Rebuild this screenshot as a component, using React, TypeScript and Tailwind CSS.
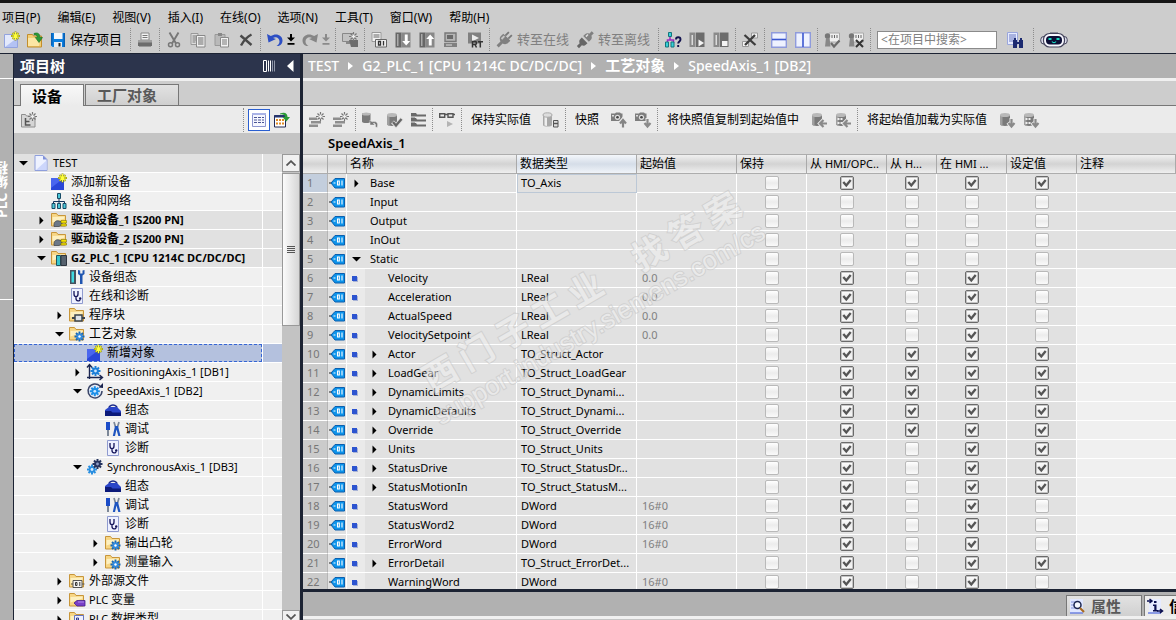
import { Fragment, type ReactNode } from "react";
import clsx from "clsx";

/* ------------------------------------------------------------------ icons */

const star = (
  <path d="M11.500-.5v9M7 4h9M8.500 1l6 6M14.500 1l-6 6" stroke="#8f8f10" strokeWidth="1.900" fill="none" />
);
const starFront = (
  <path d="M11.500 0v8M7.500 4h8M8.800 1.300l5.400 5.400M14.200 1.300L8.800 6.700" stroke="#ffff3c" strokeWidth="1.100" fill="none" />
);
const grayStar = (
  <>
    <path d="M11.500 0v9M7 4.500h9M8.500 1.500l6 6M14.500 1.500l-6 6" stroke="#777" strokeWidth="1.200" fill="none" />
    <path d="M11.500 2.500v4M9.500 4.500h4" stroke="#eee" strokeWidth="1.600" />
  </>
);
const folder = (
  <>
    <path d="M.5 1.500h5l1.500 2h7.500v10.500h-14z" fill="#f7d685" stroke="#c8963a" />
    <path d="M1.500 5l12-.5v2l-12 4z" fill="#fdf0c0" />
  </>
);
const gear = (
  <>
    <path d="M10.500 5.500v10M5.500 10.500h10M7 7l7 7M14 7l-7 7" stroke="#1767b8" strokeWidth="1.900" />
    <circle cx="10.500" cy="10.500" r="3" fill="#2f8be0" />
    <circle cx="10.500" cy="10.500" r="1.200" fill="#fff" />
  </>
);
const gearAt = (x: number, y: number, color: string, light: string) => (
  <g transform={`translate(${x} ${y})`}>
    <path d="M0-5V5M-5 0H5M-3.500-3.500L3.500 3.500M3.500-3.500L-3.500 3.500" stroke={color} strokeWidth="2" />
    <circle r="3.200" fill={color} />
    <circle r="1.400" fill={light} />
  </g>
);
const cyl = (
  <>
    <path d="M1 3v9c0 2.600 10 2.600 10 0V3z" fill="#7a7a7a" />
    <path d="M1 3v9c0 1 1 1.500 2.500 1.800V4z" fill="#a0a0a0" />
    <ellipse cx="6" cy="3" rx="5" ry="2" fill="#b9b9b9" />
  </>
);
const cylDots = <path d="M2.500 6h2v2h-2zM5.500 6h2v2h-2zM2.500 10h2v2h-2zM5.500 10h2v2h-2z" fill="#eee" />;
const arrowDownSmall = (
  <>
    <path d="M12.500 6v8M9 10.500l3.500 4 3.500-4" stroke="#ebebeb" strokeWidth="4" fill="none" />
    <path d="M12.500 7v7M9.500 11l3 3.500L15.500 11" stroke="#8a8a8a" strokeWidth="2.200" fill="none" />
  </>
);
const arrowLeftSmall = (
  <>
    <path d="M16 11.500H9.500M12.500 8L9 11.500l3.500 3.500" stroke="#ebebeb" strokeWidth="4" fill="none" />
    <path d="M16 11.500H9.500M12.500 8L9 11.500l3.500 3.500" stroke="#8a8a8a" strokeWidth="2.200" fill="none" />
  </>
);
const camera = (
  <>
    <path d="M0 1.500h4L5 .500h4l1 1h1.500v7.500H0z" fill="#7d7d7d" />
    <path d="M1 3h2v1.500H1z" fill="#ddd" />
    <circle cx="6.500" cy="5.300" r="2.600" fill="#ddd" />
    <circle cx="6.500" cy="5.300" r="1.300" fill="#444" />
  </>
);
const plug = (
  <g transform="rotate(45 8 8)">
    <path d="M5-1h1.800v5H5zM9.200-1H11v5H9.200z" fill="#777" />
    <path d="M3 4h10v3c0 3-2 4-3.500 4.500V17h-3v-5.500C5 11 3 10 3 7z" fill="#808080" />
    <path d="M4.500 5h2v4h-2z" fill="#c5c5c5" />
  </g>
);
const steth = (
  <>
    <path d="M2.500.5h11v15h-11z" fill="#eef1ff" stroke="#8f9bd0" />
    <path d="M5 3v3c0 3.500 4 3.500 4 0V3M7 8.500v2c0 3 4 3 4 1" stroke="#15155a" strokeWidth="1.300" fill="none" />
    <circle cx="11.200" cy="10.500" r="1.200" fill="#15155a" />
  </>
);

const ICONS: Record<string, ReactNode> = {
  newProject: (
    <>
      <path d="M.5 2.500h9l4 4v9H.5z" fill="#e3e9fc" stroke="#93a3de" />
      <path d="M1 15L13 6v9z" fill="#b3c2f4" />
      {star}
      {starFront}
    </>
  ),
  open: (
    <>
      <path d="M.5 2.500h5l1 1.500h8v11H.5z" fill="#f3ce75" stroke="#c28e2c" />
      <path d="M1 6h12l-1 8H1z" fill="#fce6a4" />
      <path d="M7 1.500c4-1.500 6 .5 6 4h2.500L12 10.500 8.300 5.500h2C10.300 3.500 9 2.500 7 2.800z" fill="#2b9a36" stroke="#146e20" strokeWidth=".6" />
    </>
  ),
  save: (
    <>
      <path d="M1 1h14v14H2.500L1 13.500z" fill="#0b7fe0" />
      <path d="M4 1h8.500v6H4z" fill="#f3f6fa" />
      <path d="M4 10h8v5H4z" fill="#e4ebf3" />
      <path d="M8.500 11h2v3.500h-2z" fill="#222" />
      <path d="M1 1h1.500v12H1zM13.500 1H15v14h-1.500z" fill="#0960b5" />
    </>
  ),
  print: (
    <>
      <path d="M4 1h8v7H4z" fill="#f3f3f3" stroke="#888" />
      <path d="M5.500 3.500h5M5.500 5.500h5" stroke="#777" />
      <path d="M1 8h14v3H1z" fill="#a0a0a0" />
      <path d="M1 10.500h14V14H1z" fill="#6c6c6c" />
      <path d="M2 14h12v1H2z" fill="#999" />
    </>
  ),
  cut: (
    <>
      <path d="M3.500.5l6.500 11M12.500.5L6 11.500" stroke="#777" strokeWidth="1.900" />
      <circle cx="4.500" cy="12.800" r="2" fill="none" stroke="#777" strokeWidth="1.500" />
      <circle cx="11.500" cy="12.800" r="2" fill="none" stroke="#777" strokeWidth="1.500" />
    </>
  ),
  copy: (
    <>
      <path d="M1 1.500h7v11H1z" fill="#ddd" stroke="#999" />
      <path d="M2.500 4h4M2.500 6h4M2.500 8h4M2.500 10h3" stroke="#777" />
      <path d="M6.500 3.500H15v11.500H6.500z" fill="#f0f0f0" stroke="#888" />
      <path d="M8 6h5.500M8 8h5.500M8 10h5.500M8 12h5.500" stroke="#666" />
    </>
  ),
  paste: (
    <>
      <path d="M1 2.500h10v11H1z" fill="#b9b9b9" stroke="#999" />
      <path d="M4 1h4v3H4z" fill="#888" />
      <path d="M6.500 5.500h8v9.500h-8z" fill="#f2f2f2" stroke="#8a8a8a" />
      <path d="M8 8h5M8 10h5M8 12h5" stroke="#777" />
    </>
  ),
  remove: (
    <path d="M2.500 3.500l11 9.500M13.500 2.500c-4 2-8 6.500-10.500 11" stroke="#4a4a4a" strokeWidth="2.400" fill="none" />
  ),
  undo: (
    <path d="M0 2l1.500 8.500L9 7 6 6c3-2 6.500 0 6.500 3.500 0 2-1.500 3.500-3 4.500 4 .5 6-2.500 6-5.500C15.500 3 9 .500 3.800 4z" fill="#2d4fc4" />
  ),
  redo: (
    <path d="M16 2l-1.500 8.500L7 7l3-1C7 4 3.500 6 3.500 9.500c0 2 1.500 3.500 3 4.500-4 .5-6-2.500-6-5.500C.5 3 7 .500 12.200 4z" fill="#858585" />
  ),
  compileDevice: (
    <>
      <path d="M.5 1.500h11v8H.5z" fill="#c2c2c2" stroke="#888" />
      <path d="M4 10h4v2H4z" fill="#888" />
      <path d="M7 8h9v7H9z" fill="#6c6c6c" />
      {grayStar}
    </>
  ),
  compile: (
    <>
      <path d="M1 .500h9v9H1z" fill="#f2f2f2" stroke="#999" />
      <path d="M2.500 3h6M2.500 5h6" stroke="#666" />
      <path d="M4.500 7.500h11v7.500h-11z" fill="#eee" stroke="#666" />
      <path d="M7.500 9.500v3.500h2V9.500zM12.500 9v4.500" stroke="#333" strokeWidth="1.300" fill="none" />
    </>
  ),
  download: (
    <>
      <path d="M.5.500h6v15h-6z" fill="#666" />
      <path d="M2 2h1.500v12H2z" fill="#aaa" />
      <path d="M6.500.500H15.500v15h-9z" fill="#888" />
      <path d="M9.800 2.500h2.900V9h2.500l-4 4.500-4-4.500h2.600z" fill="#fff" />
    </>
  ),
  upload: (
    <>
      <path d="M.5.500h6v15h-6z" fill="#666" />
      <path d="M2 2h1.500v12H2z" fill="#aaa" />
      <path d="M6.500.500H15.500v15h-9z" fill="#888" />
      <path d="M9.800 13.500h2.900V7h2.500l-4-4.500-4 4.500h2.600z" fill="#fff" />
    </>
  ),
  simulate: (
    <>
      <path d="M2 1h11v8.500H2z" fill="#b5b5b5" stroke="#777" strokeWidth="1.400" />
      <path d="M4 3h6v4H4z" fill="#6a6a6a" />
      <path d="M1 11h13v4H1z" fill="#808080" />
      <path d="M3 13h6" stroke="#ddd" />
    </>
  ),
  runtime: (
    <>
      <path d="M1 .500h13v11H1z" fill="#808080" />
      <path d="M5 2.500l7 3.500-7 3.500z" fill="#ececec" />
      <path d="M5.500 15.500v-6h2.500c2 0 2 3 0 3H6M8 12.500l1.500 3M11 9.800h5M13.300 10v5.500" stroke="#333" strokeWidth="1.500" fill="none" />
    </>
  ),
  plug,
  unplug: (
    <g transform="rotate(45 8 8)">
      <path d="M4 8.500h8v2c0 2-1 3-2.500 3.500V18h-3v-4C5 13.500 4 12.500 4 10.500z" fill="#666" />
      <path d="M4 6.500h8V4c0-2-1-3-2.500-3.500V-3h-3V.500C5 1 4 2 4 4z" fill="#808080" />
      <path d="M5.500 2h1.500v3H5.500z" fill="#ddd" />
    </g>
  ),
  topology: (
    <>
      <path d="M5 3.500v4M2.500 11V8h6v3" stroke="#9b2bc0" strokeWidth="1.500" fill="none" />
      <path d="M3.500.5h3v4h-3zM.5 10h3v5h-3zM6 10h3v5H6z" fill="#38d0d8" stroke="#14747c" />
      <path d="M11 7.500c0-3 4.500-3 4.500 0 0 2-2.300 2-2.300 4M13.200 13v2" stroke="#12124f" strokeWidth="1.900" fill="none" />
    </>
  ),
  startCpu: (
    <>
      <path d="M.5.500h6v14.500h-6z" fill="#8a8a8a" />
      <path d="M2.500 3h1.500v10H2.500z" fill="#dcdcdc" />
      <path d="M7 .500h8.500V15H7z" fill="#6c6c6c" />
      <path d="M9.500 7.500L15 11l-5.500 3.500z" fill="#f3f3f3" />
    </>
  ),
  stopCpu: (
    <>
      <path d="M.5.500h6v14.500h-6z" fill="#8a8a8a" />
      <path d="M2.500 3h1.500v10H2.500z" fill="#dcdcdc" />
      <path d="M7 .500h8.500V15H7z" fill="#6c6c6c" />
      <path d="M9 9h5.500v5H9z" fill="#f3f3f3" />
    </>
  ),
  crossRef: (
    <>
      <path d="M9.500 1h6v5h-6zM.5 9.500h6v5h-6z" fill="#f3f3f3" stroke="#999" />
      <path d="M2.500 3l11 10M13 3L3 13" stroke="#3d3d3d" strokeWidth="2.300" />
    </>
  ),
  splitH: (
    <>
      <path d="M.7.700h14.600v14.600H.7z" fill="#eef2ff" stroke="#8f9bdc" strokeWidth="1.400" />
      <path d="M1 7.500h14" stroke="#3a56d0" strokeWidth="1.600" />
    </>
  ),
  splitV: (
    <>
      <path d="M.7.700h14.600v14.600H.7z" fill="#eef2ff" stroke="#8f9bdc" strokeWidth="1.400" />
      <path d="M8 1v14" stroke="#3a56d0" strokeWidth="1.600" />
    </>
  ),
  signCheck: (
    <>
      <path d="M5 1h10.500v9H5z" fill="#efefef" stroke="#aaa" />
      <path d="M8 3v3M10.500 3v3M13 3v3" stroke="#666" />
      <circle cx="3.500" cy="4" r="2.700" fill="#777" />
      <path d="M2 6h3.500l1 8.500H1z" fill="#888" />
      <path d="M7 11l3 3.500 5.500-6" stroke="#6a6a6a" strokeWidth="2.200" fill="none" />
    </>
  ),
  signCross: (
    <>
      <path d="M5 1h10.500v9H5z" fill="#efefef" stroke="#aaa" />
      <path d="M8 3v3M10.500 3v3M13 3v3" stroke="#666" />
      <circle cx="3.500" cy="4" r="2.700" fill="#777" />
      <path d="M2 6h3.500l1 8.500H1z" fill="#888" />
      <path d="M8 8l7 7M15 8l-7 7" stroke="#333" strokeWidth="2" />
    </>
  ),
  searchProject: (
    <>
      <path d="M.5.500h10v12H.5z" fill="#e6ebff" stroke="#9aa6dc" />
      <path d="M2 3h7M2 5h7M2 7h5M2 9h4" stroke="#6b78c0" />
      <path d="M6 8h4v8H6zM12 8h4v8h-4zM7 6h2v2H7zM13 6h2v2h-2zM9 10h4v2H9z" fill="#1c2a70" />
    </>
  ),
  newGroup: (
    <>
      <path d="M.5 2.500h4l1 1.500h8.500v11H.5z" fill="#d5d5d5" stroke="#8e8e8e" />
      <path d="M4.500 6v7h5M4.500 9.500h4" stroke="#555" strokeWidth="1.500" fill="none" />
      {grayStar}
    </>
  ),
  tableView: (
    <>
      <path d="M1.500 1.500h13v13h-13z" fill="#f6f7ff" stroke="#8c95cf" />
      <path d="M3 5.500h10M3 8h10M3 10.500h10" stroke="#4a5494" strokeDasharray="3 1" />
      <path d="M1 1h14v2H1z" fill="#aab3e6" />
    </>
  ),
  exportTable: (
    <>
      <path d="M.5 3.500h11v11.500H.5z" fill="#fff" stroke="#222a55" />
      <path d="M.5 3h11v2.500H.5z" fill="#27356f" />
      <path d="M2 7h2v2H2zM5 7h2v2H5zM8 7h2v2H8zM2 10.500h2v2H2zM5 10.500h2v2H5zM8 10.500h2v2H8z" fill="#e08a22" />
      <path d="M6 1.500c5-2 7.500 0 7.500 3.500H16l-3.700 4.500L8.500 5H11C11 3 9 2 6 2.500z" fill="#2b9a36" />
    </>
  ),
  insertRow: (
    <>
      <path d="M0 5.500h8V8H0zM2 9h10v2.500H2zM0 12.500h9V15H0z" fill="#8e8e8e" />
      {grayStar}
    </>
  ),
  dbUndo: (
    <>
      <path d="M0 1.500v8c0 2 8.500 2 8.500 0v-8z" fill="#7a7a7a" />
      <ellipse cx="4.200" cy="2" rx="4.200" ry="1.600" fill="#b9b9b9" />
      <path d="M8 8v5h5l-1.600-1.600c1.800-.5 2.300.8 2 3.600l1.800.5C16.500 11.500 15 8.500 10 9.800z" fill="#777" stroke="#ebebeb" strokeWidth=".5" />
    </>
  ),
  dbCheck: (
    <>
      {cyl}
      <path d="M6.500 10l3.500 3.500L16 6.500" stroke="#ddd" strokeWidth="4" fill="none" />
      <path d="M7 10l3 3.500 5.500-6.500" stroke="#666" strokeWidth="2.300" fill="none" />
    </>
  ),
  rows: (
    <>
      <path d="M1 1h5l1 1.500h9v2H1zM1 6h5l1 1.500h9v2H1zM1 11h5l1 1.500h9v2H1z" fill="#6a6a6a" />
      <path d="M1 4h4v2H1zM1 9h4v2H1z" fill="#aaa" />
    </>
  ),
  glasses: (
    <>
      <path d="M.7 1.700h5v3.500h-5zM9 1.700h5v3.500H9zM5.700 2.500h3.300M14 2.500h2" stroke="#555" strokeWidth="1.400" fill="none" />
      <path d="M8 9l6 3-6 3z" fill="#b4b4b4" />
    </>
  ),
  dbLock: (
    <>
      <path d="M0 3v10c0 2 9 2 9 0V3z" fill="#a8a8a8" />
      <path d="M1.500 4H4v10l-2.500-.6z" fill="#eee" />
      <ellipse cx="4.500" cy="3" rx="4.500" ry="2.200" fill="#ddd" stroke="#aaa" />
      <path d="M10.500 8.500h4.500v6.500h-4.500z" fill="#ddd" stroke="#555" />
      <path d="M11 11.500h4" stroke="#555" strokeWidth="1.400" />
    </>
  ),
  cameraUp: (
    <>
      {camera}
      <path d="M12 16V8M8.500 11.500L12 7.500l3.500 4" stroke="#ebebeb" strokeWidth="4" fill="none" />
      <path d="M12 15.500V8.500M9 11.500l3-3.500 3 3.500" stroke="#858585" strokeWidth="2.200" fill="none" />
    </>
  ),
  cameraDown: (
    <>
      {camera}
      {arrowDownSmall}
    </>
  ),
  dbLeft: (
    <>
      {cyl}
      {arrowLeftSmall}
    </>
  ),
  dbDotsLeft: (
    <>
      {cyl}
      {cylDots}
      {arrowLeftSmall}
    </>
  ),
  dbDown: (
    <>
      {cyl}
      {arrowDownSmall}
    </>
  ),
  dbDotsDown: (
    <>
      {cyl}
      {cylDots}
      {arrowDownSmall}
    </>
  ),
  project: (
    <>
      <path d="M2 .5h8l4 4v11H2z" fill="#eef2ff" stroke="#8f9fdc" />
      <path d="M3 15L13.500 5.500V15z" fill="#ccd6fb" />
      <path d="M10 .5v4h4z" fill="#7f90d8" />
    </>
  ),
  add: (
    <>
      <path d="M0 4h13v12H0z" fill="#2a46d8" />
      <path d="M0 4h13L0 14z" fill="#4a66ee" />
      {star}
      {starFront}
    </>
  ),
  network: (
    <>
      <path d="M8 5v4M2.500 11V8.500h11V11M8 8v3" stroke="#12345c" fill="none" />
      <path d="M6.500.5h3v5h-3zM1 10.500h3v5H1zM6.500 10.500h3v5h-3zM12 10.500h3v5h-3z" fill="#4cc8d8" stroke="#174a66" />
    </>
  ),
  drive: (
    <>
      {folder}
      <path d="M3 13c0-3 2-5 5-4l3 1v3l-3 1.500H3z" fill="#6c7888" stroke="#3b4450" strokeWidth=".7" />
      <path d="M10 8.500h5.500v2.500H10zM10 12h5.500v2H10z" fill="#f5e100" stroke="#6c6400" strokeWidth=".5" />
    </>
  ),
  plc: (
    <>
      {folder}
      <path d="M5.500 5.500h4v10h-4z" fill="#37c5cd" stroke="#1d5560" />
      <path d="M10 5.500h5.500v10H10z" fill="#57626e" stroke="#2f3640" />
    </>
  ),
  deviceConfig: (
    <>
      <path d="M1 1h6v14H1z" fill="#47525e" />
      <path d="M2.500 2.500H5v11H2.500z" fill="#40d8e0" />
      <path d="M9 1v4l2 1.500V15h2.500V6.500L15.500 5V1l-2 .5v3h-2.300v-3z" fill="#1f55b0" />
    </>
  ),
  diagnose: steth,
  blocks: (
    <>
      {folder}
      <path d="M6 8h7v6H6z" fill="#dfe4e8" stroke="#3c444c" strokeWidth="1.500" />
      <path d="M3 11h3M13 11h3" stroke="#3c444c" strokeWidth="1.800" />
    </>
  ),
  techFolder: (
    <>
      {folder}
      {gear}
    </>
  ),
  posAxis: (
    <>
      <path d="M2.500 15V1M0 3.500L2.500.5 5 3.500M0 13.500h15M12.500 11l3 2.500-3 2.500" stroke="#1a2550" strokeWidth="1.400" fill="none" />
      {gearAt(8.5, 7, "#1c7fd8", "#cfe8ff")}
    </>
  ),
  speedAxis: (
    <>
      <path d="M13 3A7 7 0 1 0 15 8" stroke="#3a4568" strokeWidth="1.500" fill="#e9edf6" />
      <path d="M11.500 4.500L16 5V0z" fill="#1a2550" />
      {gearAt(7.8, 8.3, "#1c8fe8", "#cfe8ff")}
    </>
  ),
  syncAxis: (
    <>
      {gearAt(5, 10.5, "#2a8fe0", "#d8ecff")}
      {gearAt(10.5, 5, "#25345f", "#8fa0cc")}
    </>
  ),
  toolbox: (
    <>
      <path d="M4.500 7V4.500c2-2 5-2 7 0V7" stroke="#1a2a88" strokeWidth="1.700" fill="none" />
      <path d="M0 8l4-3h8l4 4v5H0z" fill="#2a45c8" />
      <path d="M0 9h6l1.500 1.500H16V14H0z" fill="#0c1a7a" />
    </>
  ),
  tools: (
    <>
      <path d="M1 1h4v8H1z" fill="#1b4cc8" />
      <path d="M2 9h2v6H2z" fill="#7d8898" />
      <path d="M9 1l1.500 5M14 1l-1.500 5" stroke="#7d8898" strokeWidth="1.700" />
      <path d="M10 5h3l2.500 10h-2.200L11.500 8.500 10 15H7.800z" fill="#1f55c0" />
    </>
  ),
  external: (
    <>
      {folder}
      <path d="M4 7.500h9v7H4z" fill="#f3f3f3" stroke="#555" />
      <path d="M2 11h2M13 11h2.500" stroke="#555" />
      <path d="M6.500 9.500v3h1.500v-3zM10.800 9v4" stroke="#333" fill="none" />
    </>
  ),
  tags: (
    <>
      {folder}
      <path d="M5 11l3-2.500h8V14H8z" fill="#7a3fc8" stroke="#45208a" strokeWidth=".8" />
      <path d="M9 10h6" stroke="#b28cec" />
    </>
  ),
  dataTypes: (
    <>
      {folder}
      <path d="M5.500 4.500h9v10h-9z" fill="#eef1ff" stroke="#6674c0" />
      <path d="M7.500 7h2v2h-2zM11 9v4M7.500 11h2v2" stroke="#303c90" fill="none" />
    </>
  ),
  properties: (
    <>
      <path d="M1 1h13v14H1z" fill="#dfe6ff" />
      <path d="M1 15h13" stroke="#6e82e0" strokeWidth="1.500" />
      <path d="M2 4h4M2 7h3M2 10h4" stroke="#8090d8" />
      <circle cx="8.500" cy="7" r="3.500" fill="#f5f8ff" stroke="#1a2550" strokeWidth="1.500" />
      <path d="M11 10l4 4" stroke="#a86a20" strokeWidth="2.200" />
    </>
  ),
  info: (
    <>
      <path d="M2 1h12v14H2z" fill="#e6ebff" />
      <path d="M1 15h13" stroke="#6e82e0" strokeWidth="1.500" />
      <path d="M0 3h4M2.500 1l2.500 2-2.500 2M10 13h5M13 11l2.500 2-2.500 2" stroke="#0a0f50" strokeWidth="1.500" fill="none" />
      <path d="M7 3h2.500v2H7zM6 6.500h3.500V12H11v1.500H6V12h1.300V8H6z" fill="#0a0f50" />
    </>
  ),
};

function Icon({ name }: { name: string }) {
  return (
    <svg viewBox="0 0 16 16" className="size-4 shrink-0 overflow-visible" aria-hidden="true">
      {ICONS[name]}
    </svg>
  );
}

function TagIcon() {
  return (
    <svg viewBox="0 0 16 12" className="mx-auto h-3 w-4" aria-hidden="true">
      <path d="M0 6h4" stroke="#444" strokeWidth="1.200" />
      <path d="M2 6l4-4.500h9.500v9.500H6z" fill="#0c93ea" stroke="#0b5fae" />
      <path d="M8.500 4h1.800v4H8.500zM13 3.500v5" stroke="#fff" strokeWidth="1.100" fill="none" />
      <path d="M4.500 6h2" stroke="#fff" />
    </svg>
  );
}

function Triangle({ open }: { open: boolean }) {
  return (
    <svg viewBox="0 0 9 9" className="size-[9px]" aria-hidden="true">
      {open ? <path d="M0 2h9L4.500 6.500z" fill="#000" /> : <path d="M2.500 .5L6.500 4.500 2.500 8.500z" fill="#000" />}
    </svg>
  );
}

/* --------------------------------------------------------------- toolbars */

function Group({ children, last }: { children: ReactNode; last?: boolean }) {
  return (
    <div className={clsx("flex h-full items-center px-0.5", !last && "border-r border-dotted border-[#8c8c8c]")}>
      {children}
    </div>
  );
}

function Tool({ name, label }: { name: string; label: string }) {
  return (
    <button type="button" aria-label={label} className="flex h-6 w-6 shrink-0 items-center justify-center">
      <Icon name={name} />
    </button>
  );
}

function Dropper({ dim, label }: { dim?: boolean; label: string }) {
  return (
    <button type="button" aria-label={label} className="flex h-6 w-[11px] shrink-0 items-center">
      <svg viewBox="0 0 8 12" className="h-3 w-2" aria-hidden="true">
        <path d="M3 0h2v3.500h3L4 7.500 0 3.500h3zM.5 9h7v1.700h-7z" fill={dim ? "#8a8a8a" : "#000"} />
      </svg>
    </button>
  );
}

const MENU = ["项目(P)", "编辑(E)", "视图(V)", "插入(I)", "在线(O)", "选项(N)", "工具(T)", "窗口(W)", "帮助(H)"];

function MainToolbar() {
  return (
    <div className="flex h-[25px] shrink-0 items-center overflow-hidden whitespace-nowrap pb-0.5 text-[13px]">
      <div className="flex h-full items-center border-r border-dotted border-[#8c8c8c] pr-2">
        {[
          ["newProject", "新建项目"],
          ["open", "打开项目"],
          ["save", "保存"],
        ].map(([icon, label]) => (
          <button key={icon} type="button" aria-label={label} className="flex h-6 w-[23px] items-center justify-center">
            <Icon name={icon} />
          </button>
        ))}
        <button type="button" className="h-6 pl-px">
          保存项目
        </button>
      </div>
      <Group>
        <Tool name="print" label="打印" />
      </Group>
      <Group>
        <Tool name="cut" label="剪切" />
        <Tool name="copy" label="复制" />
        <Tool name="paste" label="粘贴" />
        <Tool name="remove" label="删除" />
      </Group>
      <Group>
        <Tool name="undo" label="撤销" />
        <Dropper label="撤销列表" />
        <Tool name="redo" label="重做" />
        <Dropper dim label="重做列表" />
      </Group>
      <Group>
        <Tool name="compileDevice" label="设备" />
      </Group>
      <Group>
        <Tool name="compile" label="编译" />
        <Tool name="download" label="下载" />
        <Tool name="upload" label="上传" />
        <Tool name="simulate" label="仿真" />
        <Tool name="runtime" label="运行系统" />
      </Group>
      <Group>
        <button type="button" className="flex h-6 items-center gap-[5px] px-1 text-[#808080]">
          <Icon name="plug" />
          转至在线
        </button>
        <button type="button" className="flex h-6 items-center gap-[5px] px-1 text-[#808080]">
          <Icon name="unplug" />
          转至离线
        </button>
        <span className="w-0.5" />
      </Group>
      <Group>
        <Tool name="topology" label="可访问的设备" />
        <Tool name="startCpu" label="启动 CPU" />
        <Tool name="stopCpu" label="停止 CPU" />
      </Group>
      <Group>
        <Tool name="crossRef" label="交叉引用" />
      </Group>
      <Group>
        <Tool name="splitH" label="水平拆分" />
        <Tool name="splitV" label="垂直拆分" />
      </Group>
      <Group>
        <Tool name="signCheck" label="签名" />
        <Tool name="signCross" label="取消签名" />
      </Group>
      <Group>
        <input
          aria-label="在项目中搜索"
          placeholder="<在项目中搜索>"
          className="mx-1 h-[18px] w-[120px] border border-[#8a8a8a] bg-white px-[3px] text-xs placeholder:text-[#808080]"
        />
        <span className="w-0.5" />
        <Tool name="searchProject" label="搜索" />
        <span className="w-1" />
      </Group>
      <Group last>
        <button type="button" aria-label="助手" className="ml-1">
          <svg viewBox="0 0 28 16" className="h-4 w-7" aria-hidden="true">
            <path d="M10 1.500h8" stroke="#44445c" strokeWidth="2" />
            <rect x=".8" y="4.500" width="26.400" height="7.500" rx="3" fill="#dfe0ee" stroke="#44445c" />
            <rect x="3.500" y="1.500" width="21" height="13.500" rx="6" fill="#f7f7ff" stroke="#44445c" strokeWidth="1.200" />
            <rect x="6" y="4" width="16" height="8.500" rx="4" fill="#0c0f36" />
            <path d="M8.500 7h3M16.500 7h3" stroke="#18d8c0" strokeWidth="2" />
            <path d="M12 9.500c1 1.500 3 1.500 4 0" stroke="#18d8c0" strokeWidth="1.200" fill="none" />
          </svg>
        </button>
      </Group>
    </div>
  );
}

function EditorToolbar() {
  return (
    <div className="flex h-[27px] shrink-0 items-center overflow-hidden whitespace-nowrap bg-[#ebebeb] py-0.5 text-xs">
      <Group>
        <Tool name="insertRow" label="插入行" />
        <Tool name="insertRow" label="添加行" />
      </Group>
      <Group>
        <Tool name="dbUndo" label="复位起始值" />
        <Tool name="dbCheck" label="检查" />
        <Tool name="rows" label="展开模式" />
      </Group>
      <Group>
        <Tool name="glasses" label="监视" />
      </Group>
      <Group>
        <button type="button" className="pl-[7px] pr-2">
          保持实际值
        </button>
        <Tool name="dbLock" label="保持" />
      </Group>
      <Group>
        <button type="button" className="pl-[7px] pr-2">
          快照
        </button>
        <Tool name="cameraUp" label="拍摄快照" />
        <Tool name="cameraDown" label="恢复快照" />
      </Group>
      <Group>
        <button type="button" className="pl-[7px] pr-2">
          将快照值复制到起始值中
        </button>
        <Tool name="dbLeft" label="全部复制" />
        <Tool name="dbDotsLeft" label="复制设定值" />
      </Group>
      <Group last>
        <button type="button" className="pl-[7px] pr-2">
          将起始值加载为实际值
        </button>
        <Tool name="dbDown" label="全部加载" />
        <Tool name="dbDotsDown" label="加载设定值" />
      </Group>
    </div>
  );
}

/* ------------------------------------------------------------------- tree */

/** Chinese runs are set one size larger than the Latin text beside them. */
function Mixed({ text }: { text: string }) {
  return (
    <>
      {text.split(/([\u4e00-\u9fff]+)/).map((part, i) =>
        /[\u4e00-\u9fff]/.test(part) ? (
          <span key={i} className="text-xs">
            {part}
          </span>
        ) : (
          <Fragment key={i}>{part}</Fragment>
        ),
      )}
    </>
  );
}

type Node = { level: number; icon: string; text: string; open?: boolean; bold?: boolean; shade?: boolean; selected?: boolean };

const TREE: Node[] = [
  { level: 0, icon: "project", text: "TEST", open: true, shade: true },
  { level: 1, icon: "add", text: "添加新设备" },
  { level: 1, icon: "network", text: "设备和网络" },
  { level: 1, icon: "drive", text: "驱动设备_1 [S200 PN]", open: false, bold: true, shade: true },
  { level: 1, icon: "drive", text: "驱动设备_2 [S200 PN]", open: false, bold: true, shade: true },
  { level: 1, icon: "plc", text: "G2_PLC_1 [CPU 1214C DC/DC/DC]", open: true, bold: true, shade: true },
  { level: 2, icon: "deviceConfig", text: "设备组态" },
  { level: 2, icon: "diagnose", text: "在线和诊断" },
  { level: 2, icon: "blocks", text: "程序块", open: false },
  { level: 2, icon: "techFolder", text: "工艺对象", open: true },
  { level: 3, icon: "add", text: "新增对象", selected: true },
  { level: 3, icon: "posAxis", text: "PositioningAxis_1 [DB1]", open: false },
  { level: 3, icon: "speedAxis", text: "SpeedAxis_1 [DB2]", open: true },
  { level: 4, icon: "toolbox", text: "组态" },
  { level: 4, icon: "tools", text: "调试" },
  { level: 4, icon: "diagnose", text: "诊断" },
  { level: 3, icon: "syncAxis", text: "SynchronousAxis_1 [DB3]", open: true },
  { level: 4, icon: "toolbox", text: "组态" },
  { level: 4, icon: "tools", text: "调试" },
  { level: 4, icon: "diagnose", text: "诊断" },
  { level: 4, icon: "techFolder", text: "输出凸轮", open: false },
  { level: 4, icon: "techFolder", text: "测量输入", open: false },
  { level: 2, icon: "external", text: "外部源文件", open: false },
  { level: 2, icon: "tags", text: "PLC 变量", open: false },
  { level: 2, icon: "dataTypes", text: "PLC 数据类型", open: false },
];

const INDENT = ["pl-0", "pl-[18px]", "pl-9", "pl-[54px]", "pl-[72px]"];

function TreeRow({ node }: { node: Node }) {
  const bg = node.selected ? "bg-[#b4c1de]" : node.shade ? "bg-[#e1e1e1]" : "bg-[#f0f0f0]";
  return (
    <li className="flex h-[19px] shrink-0 border-b border-white">
      <div
        className={clsx(
          "flex min-w-0 flex-1 items-center overflow-hidden",
          bg,
          node.selected && "outline-1 -outline-offset-1 outline-dashed outline-[#3465d4]",
          INDENT[node.level],
        )}
      >
        <span className="flex w-[18px] shrink-0 justify-center">
          {node.open !== undefined && <Triangle open={node.open} />}
        </span>
        <span className="flex w-[21px] shrink-0 pl-px">
          <Icon name={node.icon} />
        </span>
        <span className={clsx("whitespace-nowrap leading-[18px]", node.bold && "font-bold")}>
          <Mixed text={node.text} />
        </span>
      </div>
      <div className={clsx("w-[20px] border-l border-white", bg)} />
    </li>
  );
}

function ProjectTree() {
  return (
    <aside className="flex w-[287px] shrink-0 flex-col border-l border-[#1c2333]">
      <header className="flex h-6 shrink-0 items-center bg-[#2c344c] px-1.5 text-white">
        <h2 className="flex-1 text-[15px] font-bold leading-6">项目树</h2>
        <svg viewBox="0 0 12 12" className="mr-3 size-3" aria-hidden="true">
          <path d="M.5.500h3v11h-3zM5.500 .5v11M7.500 .5v11" stroke="#fff" fill="none" />
          <path d="M9.500 .5v11M11.500 .5v11" stroke="#8f96a8" />
        </svg>
        <svg viewBox="0 0 7 12" className="h-3 w-[7px]" aria-hidden="true">
          <path d="M6.500 0v12L0 6z" fill="#fff" />
        </svg>
      </header>
      <div className="flex h-[28px] shrink-0 items-end border-t-[3px] border-[#f0f0f0] bg-[#cdcdcd] text-[15px] font-bold">
        <div className="h-px w-[6px] bg-[#777]" />
        <button type="button" className="h-[22px] w-16 border border-b-0 border-[#777] bg-gradient-to-b from-[#f8f8f8] to-[#ebebeb] pr-2.5 leading-5">
          设备
        </button>
        <div className="h-px w-px bg-[#777]" />
        <button type="button" className="h-[22px] w-[94px] border border-[#777] bg-gradient-to-b from-[#e2e2e2] to-[#cfcfcf] pr-2.5 leading-5 text-[#595959]">
          工厂对象
        </button>
        <div className="h-px flex-1 bg-[#777]" />
      </div>
      <div className="flex h-[27px] shrink-0 items-center bg-[#ebebeb] pl-[3px] pr-1.5">
        <Tool name="newGroup" label="新增组" />
        <div className="flex-1" />
        <div className="mr-1 h-6 border-r border-dotted border-[#8c8c8c]" />
        <button type="button" aria-label="详细视图" className="flex size-[22px] items-center justify-center border border-[#2a5fd0] bg-white">
          <Icon name="tableView" />
        </button>
        <Tool name="exportTable" label="导出" />
      </div>
      <div className="h-[21px] shrink-0 bg-[#c4c4c4]" />
      <div className="flex min-h-0 flex-1 bg-[#f0f0f0]">
        <ul className="flex min-w-0 flex-1 flex-col overflow-hidden text-[11px]">
          {TREE.map((node, i) => (
            <TreeRow key={i} node={node} />
          ))}
        </ul>
        <div className="flex w-[18px] flex-col bg-[#c3c3c3]">
          <button type="button" aria-label="向上" className="flex h-[18px] items-center justify-center border border-[#999] bg-[#f0f0f0]">
            <svg viewBox="0 0 10 6" className="h-1.5 w-2.5" aria-hidden="true">
              <path d="M.5 5.500L5 1.200l4.500 4.300" stroke="#555" strokeWidth="1.800" fill="none" />
            </svg>
          </button>
          <div className="mt-px flex h-[153px] items-center justify-center border border-[#999] bg-gradient-to-r from-[#fbfbfb] to-[#d6d6d6]">
            <div className="flex w-2 flex-col gap-px">
              <div className="h-px bg-[#555]" />
              <div className="h-px bg-[#555]" />
              <div className="h-px bg-[#555]" />
              <div className="h-px bg-[#555]" />
            </div>
          </div>
          <div className="flex-1" />
          <button type="button" aria-label="向下" className="flex h-[10px] items-end justify-center border border-b-0 border-[#999] bg-[#f0f0f0]">
            <svg viewBox="0 0 10 6" className="h-1.5 w-2.5" aria-hidden="true">
              <path d="M.5.500L5 4.800 9.500.500" stroke="#555" strokeWidth="1.800" fill="none" />
            </svg>
          </button>
        </div>
      </div>
    </aside>
  );
}

/* ------------------------------------------------------------------ table */

type Row = { name: string; type?: string; start?: string; nested?: boolean; open?: boolean; checks: string };

/* checks: one digit for each of the columns 保持, 从 HMI/OPC, 从 HMI, 在 HMI, 设定值 */
const ROWS: Row[] = [
  { name: "Base", type: "TO_Axis", open: false, checks: "01111" },
  { name: "Input", checks: "00000" },
  { name: "Output", checks: "00000" },
  { name: "InOut", checks: "00000" },
  { name: "Static", open: true, checks: "00000" },
  { name: "Velocity", type: "LReal", start: "0.0", nested: true, checks: "01010" },
  { name: "Acceleration", type: "LReal", start: "0.0", nested: true, checks: "01010" },
  { name: "ActualSpeed", type: "LReal", start: "0.0", nested: true, checks: "01010" },
  { name: "VelocitySetpoint", type: "LReal", start: "0.0", nested: true, checks: "01010" },
  { name: "Actor", type: "TO_Struct_Actor", nested: true, open: false, checks: "01111" },
  { name: "LoadGear", type: "TO_Struct_LoadGear", nested: true, open: false, checks: "01111" },
  { name: "DynamicLimits", type: "TO_Struct_Dynami...", nested: true, open: false, checks: "01111" },
  { name: "DynamicDefaults", type: "TO_Struct_Dynami...", nested: true, open: false, checks: "01111" },
  { name: "Override", type: "TO_Struct_Override", nested: true, open: false, checks: "01111" },
  { name: "Units", type: "TO_Struct_Units", nested: true, open: false, checks: "01011" },
  { name: "StatusDrive", type: "TO_Struct_StatusDr...", nested: true, open: false, checks: "01011" },
  { name: "StatusMotionIn", type: "TO_Struct_StatusM...", nested: true, open: false, checks: "01011" },
  { name: "StatusWord", type: "DWord", start: "16#0", nested: true, checks: "01010" },
  { name: "StatusWord2", type: "DWord", start: "16#0", nested: true, checks: "01010" },
  { name: "ErrorWord", type: "DWord", start: "16#0", nested: true, checks: "01010" },
  { name: "ErrorDetail", type: "TO_Struct_ErrorDet...", nested: true, open: false, checks: "01011" },
  { name: "WarningWord", type: "DWord", start: "16#0", nested: true, checks: "01010" },
];

const HEADS = ["", "", "名称", "数据类型", "起始值", "保持", "从 HMI/OPC..", "从 H...", "在 HMI ...", "设定值", "注释"];
const CHECK_NAMES = ["保持", "从 HMI/OPC 可访问", "从 HMI 可写", "在 HMI 中可见", "设定值"];
const CELL = "border-r border-b border-white p-0";

function Check({ on, label }: { on: boolean; label: string }) {
  return (
    <label className="mx-auto grid size-3.5">
      <input
        type="checkbox"
        aria-label={label}
        defaultChecked={on}
        className="peer col-start-1 row-start-1 size-3.5 appearance-none rounded-xs border border-[#b9b9b9] bg-gradient-to-b from-white via-[#ececec] to-[#fafafa] checked:border-[#6a6a6a] checked:shadow-[inset_0_0_0_1px_#c4c4c4]"
      />
      <svg viewBox="0 0 14 14" className="pointer-events-none invisible col-start-1 row-start-1 size-3.5 peer-checked:visible" aria-hidden="true">
        <path d="M3.300 6l3 3.500L10.700 4" stroke="#555" strokeWidth="2.300" fill="none" />
      </svg>
    </label>
  );
}

function DataTable() {
  return (
    <table className="w-full table-fixed border-separate border-spacing-0 text-[11px]">
      <colgroup>
        <col className="w-[25px]" />
        <col className="w-[19px]" />
        <col className="w-[170px]" />
        <col className="w-[120px]" />
        <col className="w-[100px]" />
        <col className="w-[70px]" />
        <col className="w-[80px]" />
        <col className="w-[50px]" />
        <col className="w-[70px]" />
        <col className="w-[70px]" />
        <col />
      </colgroup>
      <thead>
        <tr>
          {HEADS.map((head, i) => (
            <th
              key={i}
              className={clsx(
                "h-5 overflow-hidden whitespace-nowrap border-r border-y border-r-[#aaa] border-y-[#adadad] bg-gradient-to-b p-0 pl-[3px] text-left font-normal leading-[18px]",
                i === 3 ? "from-[#f4f7fb] via-[#d5dde8] to-[#f0f4f9]" : "from-[#f0f0f0] via-[#d3d3d3] to-[#efefef]",
              )}
            >
              <Mixed text={head} />
            </th>
          ))}
        </tr>
      </thead>
      <tbody>
        {ROWS.map((row, i) => (
          <tr key={row.name} className="h-[19px] bg-[#e1e1e1]">
            <td
              className={clsx(
                "border-b border-r border-b-white border-r-[#b5b5b5] p-0 pl-1 leading-[18px] text-[#777]",
                i === 0 ? "bg-[#c3cedd]" : "bg-[#cbcbcb]",
              )}
            >
              {i + 1}
            </td>
            <td className={CELL}>
              <TagIcon />
            </td>
            <td className={CELL}>
              <div className="flex h-[18px] items-center">
                {row.nested && (
                  <span className="flex h-full w-[18px] shrink-0 items-center bg-[#eaeaea] pl-[5px]">
                    <span className="size-[5px] bg-[#2c54d0] shadow-[1px_1px_0_#a9b4d6]" />
                  </span>
                )}
                <span className="flex w-[23px] shrink-0 pl-[5px]">
                  {row.open !== undefined && <Triangle open={row.open} />}
                </span>
                <span className="whitespace-nowrap leading-[18px]">{row.name}</span>
              </div>
            </td>
            <td
              className={clsx(
                CELL,
                "overflow-hidden whitespace-nowrap pl-1 leading-[18px]",
                i === 0 && "outline-1 -outline-offset-1 outline-[#bcc8d6]",
              )}
            >
              {row.type}
            </td>
            <td className={clsx(CELL, "pl-[5px] leading-[18px] text-[#808080]")}>{row.start}</td>
            {CHECK_NAMES.map((label, c) => (
              <td key={label} className={CELL}>
                <Check on={row.checks[c] === "1"} label={`${row.name} ${label}`} />
              </td>
            ))}
            <td className={clsx("border-b border-white p-0", row.nested && "bg-[#f0f0f0]")} />
          </tr>
        ))}
      </tbody>
    </table>
  );
}

function Watermark() {
  return (
    <div className="pointer-events-none absolute left-[72px] top-[116px] flex w-[430px] -rotate-[30deg] flex-col items-center whitespace-nowrap font-bold text-[#f0f0f0] opacity-55 [-webkit-text-stroke:2px_#c4c4c4] [paint-order:stroke_fill]">
      <div className="flex gap-2 text-[34px] leading-[38px]">
        {["西", "门", "子", "工", "业", "", "找", "答", "案"].map((ch, i) => (
          <span key={i} className="min-w-6">
            {ch}
          </span>
        ))}
      </div>
      <div className="font-['Liberation_Sans',sans-serif] text-[26px] font-normal leading-9">support.industry.siemens.com/cs</div>
    </div>
  );
}

function CrumbArrow() {
  return (
    <svg viewBox="0 0 5 8" className="h-2 w-[5px] shrink-0" aria-hidden="true">
      <path d="M0 0l5 4-5 4z" fill="#fff" />
    </svg>
  );
}

function Editor() {
  const crumbs = ["TEST", "G2_PLC_1 [CPU 1214C DC/DC/DC]", "工艺对象", "SpeedAxis_1 [DB2]"];
  return (
    <main className="flex min-w-0 flex-1 flex-col border-l-[3px] border-[#1c2333]">
      <nav className="flex h-6 shrink-0 items-center gap-[9px] overflow-hidden whitespace-nowrap bg-[#b1b1b1] pl-[5px] text-sm font-medium text-white">
        {crumbs.map((crumb, i) => (
          <Fragment key={crumb}>
            {i > 0 && <CrumbArrow />}
            <a href={`#${i}`} className={clsx(i === 2 && "text-[15px] font-bold")}>
              {crumb}
            </a>
          </Fragment>
        ))}
      </nav>
      <div className="h-[28px] shrink-0 border-b border-t-[3px] border-b-[#777] border-t-[#f0f0f0] bg-[#cdcdcd]" />
      <EditorToolbar />
      <h1 className="h-[21px] shrink-0 bg-[#d9d9d9] pl-[25px] text-[13px] font-semibold leading-[21px]">SpeedAxis_1</h1>
      <div className="relative min-h-0 flex-1 overflow-hidden bg-[#e1e1e1]">
        <DataTable />
        <Watermark />
      </div>
      <footer className="flex h-[31px] shrink-0 flex-col border-t-[3px] border-[#1c2333] bg-[#b1b1b1]">
        <div className="flex h-6 items-end justify-end gap-0.5 text-[15px] font-bold">
          <button type="button" className="flex h-[21px] w-[76px] items-center gap-1.5 border border-b-0 border-[#777] bg-gradient-to-b from-[#e2e2e2] to-[#d0d0d0] pl-0.5 text-[#595959]">
            <Icon name="properties" />
            属性
          </button>
          <button type="button" className="flex h-[21px] w-8 items-center gap-1.5 overflow-hidden whitespace-nowrap border-l border-t border-[#777] bg-[#ebebeb] pl-0.5">
            <Icon name="info" />
            信息
          </button>
        </div>
        <div className="flex-1 border-b border-[#c4c4c4] bg-[#f0f0f0]" />
      </footer>
    </main>
  );
}

/* -------------------------------------------------------------------- app */

export default function App() {
  return (
    <div className="flex h-screen flex-col overflow-hidden border-t-[3px] border-[#161616] bg-[#cdcdcd] font-['Noto_Sans','Noto_Sans_CJK_SC',sans-serif] text-black">
      <nav className="flex h-[25px] shrink-0 items-center gap-[17px] overflow-hidden whitespace-nowrap pl-0.5 pt-1 text-xs">
        {MENU.map((item) => (
          <button key={item} type="button">
            {item}
          </button>
        ))}
      </nav>
      <MainToolbar />
      <div className="flex min-h-0 flex-1 border-t border-[#1c2333]">
        <div className="flex w-[13px] shrink-0 flex-col overflow-hidden bg-[#b1b1b1]">
          <div className="h-[25px] shrink-0 border-b border-white" />
          <button
            type="button"
            className="flex h-[221px] w-[13px] shrink-0 items-center justify-end border-b border-white pr-[3px] text-sm font-bold leading-4 text-white"
          >
            <span className="rotate-180 whitespace-nowrap [writing-mode:vertical-rl]">PLC 编程</span>
          </button>
        </div>
        <ProjectTree />
        <Editor />
      </div>
    </div>
  );
}
